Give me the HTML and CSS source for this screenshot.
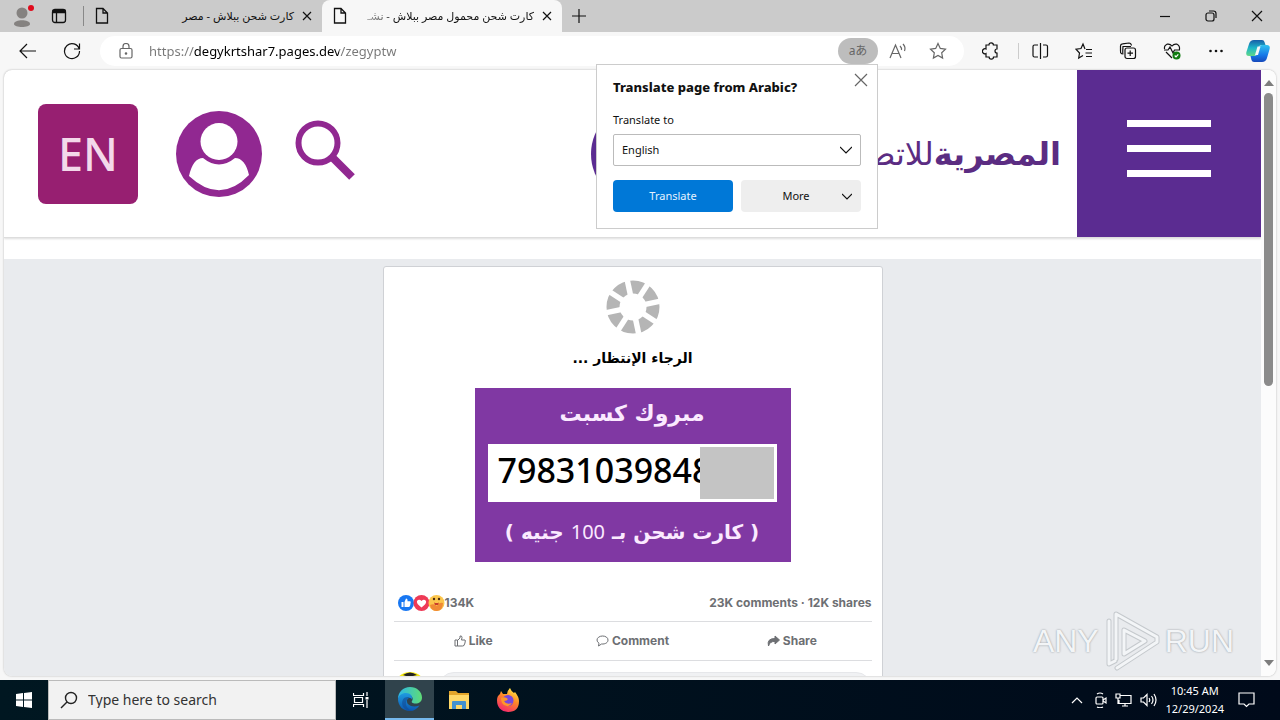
FILE: index.html
```html
<!doctype html>
<html lang="en">
<head>
    <meta charset="UTF-8">
    <title>كارت شحن محمول مصر ببلاش</title>
    <link rel="stylesheet" href="styles.css">
</head>
<body>
<div class="tabs">
    <button class="icon profile" aria-label="Profile">
        <svg width="24" height="24" viewBox="0 0 24 24">
            <circle cx="11" cy="9" r="5.5" fill="#858280"/>
            <path d="M3 20c0-5 16-5 16 0 0 4-16 4-16 0z" fill="#858280"/>
            <circle cx="20" cy="4" r="3" fill="#e00b1c"/>
        </svg>
    </button>
    <button class="icon workspace" aria-label="Tab actions">
        <svg width="16" height="16" viewBox="0 0 16 16" fill="none" stroke="#111" stroke-width="1.3">
            <rect x="1.5" y="1.5" width="13" height="13" rx="2.5"/>
            <path d="M2 2.5h12v2H2z" fill="#111"/>
            <path d="M5.5 5v9"/>
        </svg>
    </button>
    <div class="tab">
        <svg class="doc" width="14" height="18" viewBox="0 0 14 18"><path d="M1.5 1.5h6.5l4.5 4.5v10h-11zM8 1.5v4.5h4.5"/></svg>
        <span class="tab-title" dir="rtl">كارت شحن ببلاش - مصر</span>
        <button class="icon" aria-label="Close tab"><svg class="line" width="10" height="10" viewBox="0 0 10 10"><path d="M1 1l8 8M9 1l-8 8"/></svg></button>
    </div>
    <div class="tab active">
        <svg class="doc" width="14" height="18" viewBox="0 0 14 18"><path d="M1.5 1.5h6.5l4.5 4.5v10h-11zM8 1.5v4.5h4.5"/></svg>
        <span class="tab-title faded" dir="rtl">كارت شحن محمول مصر ببلاش - نشـ</span>
        <button class="icon" aria-label="Close tab"><svg class="line" width="10" height="10" viewBox="0 0 10 10"><path d="M1 1l8 8M9 1l-8 8"/></svg></button>
    </div>
    <button class="icon new-tab" aria-label="New tab"><svg class="line" width="14" height="14" viewBox="0 0 14 14"><path d="M7 0v14M0 7h14"/></svg></button>
    <div class="window-buttons">
        <button class="icon" aria-label="Minimize"><svg class="line" width="12" height="12" viewBox="0 0 12 12"><path d="M1 6.5h10"/></svg></button>
        <button class="icon" aria-label="Restore"><svg class="line" width="12" height="12" viewBox="0 0 12 12"><rect x="1" y="3" width="8" height="8" rx="2"/><path d="M4 1h4.5q2.500 0 2.500 2.500v4.500"/></svg></button>
        <button class="icon" aria-label="Close"><svg class="line" width="12" height="12" viewBox="0 0 12 12"><path d="M1 1l10 10M11 1l-10 10"/></svg></button>
    </div>
</div>

<div class="toolbar">
    <button class="icon back" aria-label="Back"><svg class="line" width="18" height="16" viewBox="0 0 18 16"><path d="M17 8H1.5M8 1L1 8l7 7"/></svg></button>
    <button class="icon reload" aria-label="Refresh"><svg class="line" width="18" height="18" viewBox="0 0 18 18"><path d="M16.2 7A7.5 7.5 0 1 0 16.5 9M16.5 1.5v5.5H11"/></svg></button>
    <div class="omnibox">
        <svg class="lock" width="14" height="16" viewBox="0 0 14 16"><rect x="1" y="5.5" width="12" height="9.5" rx="1.5"/><path d="M4 5.5V3.5a3 3 0 0 1 6 0v2"/><circle cx="7" cy="10.5" r=".7"/></svg>
        <input class="url" type="text" aria-label="Address" value="https://degykrtshar7.pages.dev/zegyptw">
        <button class="icon translate-icon" aria-label="Translate"><span>aあ</span></button>
        <button class="icon" aria-label="Read aloud"><svg class="line grey" width="18" height="16" viewBox="0 0 18 16"><path d="M1 15L6.5 2 12 15M3 10.5h7M11 3q2 2 1.5 4M14 1q3 3 1.5 7"/></svg></button>
        <button class="icon" aria-label="Favorite"><svg class="line grey" width="18" height="18" viewBox="0 0 18 18"><path d="M9 1.5l2.3 4.9 5.2.7-3.8 3.7.9 5.3L9 13.5l-4.6 2.6.9-5.3L1.5 7.1l5.2-.7z"/></svg></button>
    </div>
    <div class="tools">
        <button class="icon" aria-label="Extensions"><svg class="line" width="18" height="18" viewBox="0 0 18 18"><path d="M4 3h3a2.2 2.2 0 0 1 4.4 0H15v4a2 2 0 1 0 0 4v4h-3.500a2.2 2.2 0 0 1-4.4 0H4v-3.500a2.5 2.5 0 1 1 0-4.500z"/></svg></button>
        <span class="divider"></span>
        <button class="icon" aria-label="Split screen"><svg class="line" width="18" height="18" viewBox="0 0 18 18"><path d="M7 3H3.5Q2 3 2 4.5v9Q2 15 3.5 15H7M9.5 1v16M12 3h3q1.5 0 1.5 1.5v9q0 1.5-1.5 1.5h-3"/></svg></button>
        <button class="icon" aria-label="Favorites"><svg class="line" width="18" height="18" viewBox="0 0 18 18"><path d="M10 7L8 2 6 6.5l-5 .7 3.5 3.8L3.7 16 8 13.5M11 7.5h6M10.5 11H17M11 14.5h6"/></svg></button>
        <button class="icon" aria-label="Collections"><svg class="line" width="18" height="18" viewBox="0 0 18 18"><path d="M3 12Q1 11 1.5 9V4q0-2 2-2.2L10 1q2 0 2.5 2.5M4 12.5q-.5-1 0-8H12"/><rect x="6" y="6" width="10.5" height="10.5" rx="2"/><path d="M11.2 8.5v5.500M8.5 11.2H14"/></svg></button>
        <button class="icon" aria-label="Browser essentials"><svg class="line" width="18" height="18" viewBox="0 0 18 18"><path d="M9 16L3 10M1.5 7Q1 3.5 4 2.2 7 1.5 9 4q2-2.5 5-1.8 3 1.3 2.5 5.3M1 8h4l2-3 3 6 1.5-3H17"/><circle cx="13.5" cy="13.5" r="4" fill="#107c10" stroke="none"/><path d="M11.7 13.5l1.3 1.3 2.3-2.5" stroke="#fff"/></svg></button>
        <button class="icon" aria-label="Settings and more"><svg width="18" height="18" viewBox="0 0 18 18"><g fill="#111"><circle cx="3.5" cy="9" r="1.3"/><circle cx="9" cy="9" r="1.3"/><circle cx="14.5" cy="9" r="1.3"/></g></svg></button>
    </div>
    <button class="icon copilot" aria-label="Copilot">
        <svg width="24" height="24" viewBox="0 0 24 24">
            <defs>
                <linearGradient id="cp1" x1="0" y1="0" x2="0" y2="1"><stop offset="0" stop-color="#185ea8"/><stop offset=".5" stop-color="#1eb6c8"/><stop offset="1" stop-color="#61d887"/></linearGradient>
                <linearGradient id="cp2" x1="0" y1="0" x2="0" y2="1"><stop offset="0" stop-color="#31c3ef"/><stop offset=".6" stop-color="#1677e8"/><stop offset="1" stop-color="#1749bb"/></linearGradient>
            </defs>
            <path d="M8 1h8q2 0 2.5 2l1 3h-4q-2 0-2.5 2l-2 7q-.8 2-3 2H3q-3.5 0-2.6-4L3 5q1.2-4 5-4z" fill="url(#cp1)"/>
            <path d="M16 23H8q-2 0-2.5-2l-1-4h4q2 0 2.5-2l2-7q.8-2 3-2h5q3.5 0 2.6 4L21 19q-1.2 4-5 4z" fill="url(#cp2)"/>
            <path d="M11.5 7.5h3L12 16H9z" fill="#f7f7f7"/>
        </svg>
    </button>
</div>

<div class="view">
    <div class="page">
        <header class="site-header">
            <a class="lang" href="#">EN</a>
            <a class="user" href="#" aria-label="Account">
                <svg width="86" height="86" viewBox="0 0 86 86">
                    <circle cx="43" cy="43" r="43" fill="#912891"/>
                    <path d="M13 65Q17 47 27 47q16 13 32 0 10 0 14 17-29 30-60 1z" fill="#fff"/>
                    <circle cx="43" cy="31" r="21" fill="#912891"/>
                    <circle cx="43" cy="30.5" r="18.5" fill="#fff"/>
                </svg>
            </a>
            <a class="search" href="#" aria-label="Search">
                <svg width="62" height="62" viewBox="0 0 62 62" fill="none" stroke="#912891">
                    <circle cx="23" cy="23" r="19.5" stroke-width="6"/>
                    <path d="M36 36l21 21" stroke-width="8"/>
                </svg>
            </a>
            <div class="logo" dir="rtl">
                <span class="logo-text"><b>المصرية</b>للاتصالات</span>
                <span class="logo-mark"></span>
            </div>
            <button class="menu" aria-label="Menu"><span></span><span></span><span></span></button>
        </header>
        <main class="content">
            <div class="card">
                <svg class="spinner" width="54" height="54" viewBox="0 0 54 54">
                    <circle cx="27" cy="27" r="20" fill="none" stroke="#b5b5b5" stroke-width="13"/>
                    <g stroke="#fff" stroke-width="5.5">
                        <path d="M27 0v54" transform="rotate(-12 27 27)"/>
                        <path d="M27 0v54" transform="rotate(33 27 27)"/>
                        <path d="M27 0v54" transform="rotate(78 27 27)"/>
                        <path d="M27 0v54" transform="rotate(123 27 27)"/>
                    </g>
                </svg>
                <p class="wait" dir="rtl">الرجاء الإنتظار ...</p>
                <div class="prize">
                    <p class="prize-title" dir="rtl">مبروك كسبت</p>
                    <div class="code"><span class="digits">79831039848</span><span class="cover"></span></div>
                    <p class="prize-title value" dir="rtl">( كارت شحن بـ <span class="hundred">100</span> جنيه )</p>
                </div>
                <div class="stats">
                    <svg width="47" height="16" viewBox="0 0 47 16">
                        <circle cx="8" cy="8" r="8" fill="#1877f2"/>
                        <path d="M3.5 7h2v5h-2zM6.5 7L8 3.5q1.8 0 1.5 2.7h2.7q1 .5.3 2-.2 3.5-1.8 3.8H6.5z" fill="#fff"/>
                        <circle cx="23.5" cy="8" r="8" fill="#ee3a56"/>
                        <path d="M23.5 12.5Q18 8.5 19 6q2-2.5 4.5 0 2.5-2.5 4.5 0 1 2.5-4.5 6.500z" fill="#fff"/>
                        <circle cx="38.5" cy="8" r="8" fill="#fcc64d"/>
                        <path d="M32 10q1 6 7 6 6-1 6-8-4-1-6 3-3-3-7-1z" fill="#f08a35"/>
                        <circle cx="36" cy="4" r="1.2" fill="#4b2c11"/><circle cx="41" cy="4" r="1.2" fill="#4b2c11"/>
                        <path d="M36 7.5q3 1 5 0l-1 2.5h-3z" fill="#c93e2a"/>
                    </svg>
                    <span>134K</span>
                    <span class="counts">23K comments · 12K shares</span>
                </div>
                <div class="actions">
                    <button><svg width="12" height="12" viewBox="0 0 12 12"><path d="M1 5h2.5v6H1zM3.5 5.5L6 3V1q2-.5 2 1.5L7.5 5H11q.8 1 0 2 .4 1-.5 2 0 2-2 2h-5"/></svg>Like</button>
                    <button><svg width="13" height="12" viewBox="0 0 13 12"><path d="M6.5 1C3.5 1 1 2.8 1 5q0 2 2 3.2L2.5 11 5.5 9c4 .3 6.5-1.5 6.5-4S9.5 1 6.5 1z"/></svg>Comment</button>
                    <button><svg width="13" height="12" viewBox="0 0 13 12"><path class="solid" d="M8 1l4.5 4L8 9V6.5Q3 6 1.5 11-.5 3.5 8 3.5z"/></svg>Share</button>
                </div>
                <div class="reply">
                    <svg width="32" height="32" viewBox="0 0 32 32"><circle cx="16" cy="16" r="16" fill="#f4e916"/><path d="M9 3q7-5 14 0l-4 1H12z" fill="#222"/></svg>
                    <input type="text" aria-label="Write a comment">
                </div>
            </div>
        </main>
    </div>
    <div class="scrollbar">
        <svg width="10" height="6" viewBox="0 0 10 6"><path d="M5 0l5 6H0z" fill="#7d7d7d"/></svg>
        <span class="thumb"></span>
        <svg width="10" height="6" viewBox="0 0 10 6"><path d="M5 6l5-6H0z" fill="#7d7d7d"/></svg>
    </div>
</div>

<div class="taskbar">
    <button class="icon start" aria-label="Start"><svg width="16" height="16" viewBox="0 0 16 16" fill="#fff"><path d="M0 2l7-1v6.5H0zM8 .9L16 0v7.5H8zM0 8.5h7V15l-7-1zM8 8.5h8V16l-8-1z"/></svg></button>
    <label class="search-box">
        <svg width="18" height="18" viewBox="0 0 18 18" fill="none" stroke="#222" stroke-width="1.4"><circle cx="11" cy="7" r="5.5"/><path d="M7 11l-6 6"/></svg>
        <input type="text" placeholder="Type here to search" aria-label="Search Windows">
    </label>
    <button class="icon app" aria-label="Task view"><svg width="16" height="16" viewBox="0 0 16 16" fill="none" stroke="#fff" stroke-width="1.2"><path d="M.5 1v2.5h10V1M.5 15v-2.5h10V15M1.5 5.5h8v5h-8zM14 0v4M14 8v8"/><path d="M12.5 5h3v2.5h-3z" fill="#fff" stroke="none"/></svg></button>
    <button class="icon app open" aria-label="Microsoft Edge">
        <svg width="24" height="24" viewBox="0 0 24 24">
            <defs>
                <linearGradient id="e1" x1="0" y1="0" x2="1" y2="0"><stop offset="0" stop-color="#2bb6e8"/><stop offset="1" stop-color="#5fdc76"/></linearGradient>
                <linearGradient id="e2" x1="0" y1="0" x2="0" y2="1"><stop offset="0" stop-color="#1f9be0"/><stop offset="1" stop-color="#0b57b0"/></linearGradient>
            </defs>
            <path d="M0 12C0 5 5 0 12 0s12 5 12 10.5c0 4-3 6-6.5 6-3 0-4.5-1.2-3.5-2.5 2-3-.5-6-4-6-5 0-9 1.5-10 4z" fill="url(#e1)"/>
            <path d="M0 12c.5-3.5 4-6 8-6 4.5 0 7 3 6 6.5-.5-2-4-2.5-5 .5-1 5 5 8 12.5 5.5C19 22 16 24 12 24 5 24 0 19 0 12z" fill="url(#e2)"/>
            <path d="M9 13c-3 4 .5 10 5.5 10.7C7 25 2 18 5 12.5 6.5 10 10 9.5 12 10.5c-1.5 0-2.5 1-3 2.5z" fill="#134b96" opacity=".6"/>
        </svg>
    </button>
    <button class="icon app" aria-label="File Explorer"><svg width="22" height="20" viewBox="0 0 22 20"><path d="M1 1h7l2 2h11v16H1z" fill="#e3a52a"/><path d="M1 5h20v14H1z" fill="#ffd868"/><path d="M4 19v-7q0-1 1-1h12q1 0 1 1v7h-4v-4H8v4z" fill="#4391cf"/></svg></button>
    <button class="icon app" aria-label="Firefox">
        <svg width="24" height="24" viewBox="0 0 24 24">
            <defs><linearGradient id="f1" x1=".8" y1="0" x2=".3" y2="1"><stop offset="0" stop-color="#fff04a"/><stop offset=".45" stop-color="#ff8a26"/><stop offset="1" stop-color="#f5256e"/></linearGradient></defs>
            <path d="M5 3l2 3 4 0q0-3 3-6 1 3 4 5l1-1q4 5 4 9 0 11-11 11Q1 23 1 12q0-4 3-6z" fill="url(#f1)"/>
            <circle cx="12" cy="12.5" r="5.5" fill="#7847dc"/>
            <path d="M5 10q4-2 7 1-1 2-4 2 2 4 8 2-3 5-8 2-3-2-3-7z" fill="#ff9629"/>
        </svg>
    </button>
    <div class="tray">
        <svg width="12" height="8" viewBox="0 0 12 8"><path d="M1 7l5-5 5 5"/></svg>
        <svg width="12" height="16" viewBox="0 0 12 16"><rect x="1" y="5" width="7" height="7" rx="1"/><path d="M8 8l3-2v5l-3-2M2 2q3-2 6 0M2 15q3 1.5 6 0"/></svg>
        <svg width="17" height="14" viewBox="0 0 17 14"><path d="M5 2.5h11v8H4V7M10 10.5V13M7 13h6M1 1h4v4H1zM3 5v6"/></svg>
        <svg width="17" height="14" viewBox="0 0 17 14"><path d="M1 5h2.5L7 1.5v11L3.5 9H1zM9 5q1.5 2 0 4M11.5 3q3 4 0 8M14 1q4 6 0 12"/></svg>
        <div class="clock"><span>10:45 AM</span><span>12/29/2024</span></div>
        <svg class="notes" width="17" height="16" viewBox="0 0 17 16"><path d="M1 1h15v11h-5l-2.5 2.5L6 12H1z"/></svg>
    </div>
</div>

<div class="popup">
    <div class="popup-head">
        <strong>Translate page from Arabic?</strong>
        <button class="icon" aria-label="Close"><svg class="line grey" width="14" height="14" viewBox="0 0 14 14"><path d="M1 1l12 12M13 1L1 13"/></svg></button>
    </div>
    <label for="to">Translate to</label>
    <div class="select-wrap">
        <select id="to"><option>English</option></select>
        <svg class="line" width="12" height="8" viewBox="0 0 12 8"><path d="M0 1l6 6 6-6"/></svg>
    </div>
    <div class="popup-buttons">
        <button class="primary">Translate</button>
        <button class="more"><span>More</span><svg class="line" width="10" height="7" viewBox="0 0 10 7"><path d="M0 1l5 5 5-5"/></svg></button>
    </div>
</div>

<div class="watermark" aria-hidden="true">
    <span>ANY</span>
    <svg width="58" height="62" viewBox="0 0 58 62" fill="none" stroke-linejoin="round" stroke-linecap="round">
        <g stroke="#c5c9cd" stroke-width="5"><path d="M13 49V4l41 23v5L14 58"/><path d="M6 11v43l6-3"/><path d="M21 20v24l21-13z"/></g>
        <g stroke="#f3f5f7" stroke-width="3"><path d="M13 49V4l41 23v5L14 58"/><path d="M6 11v43l6-3"/><path d="M21 20v24l21-13z"/></g>
    </svg>
    <span>RUN</span>
</div>
</body>
</html>
```

FILE: styles.css
```css
* {
    box-sizing: border-box;
}

body {
    position: relative;
    display: flex;
    flex-direction: column;
    height: 100vh;
    margin: 0;
    overflow: hidden;
    font: 12px/16px "Noto Sans", "DejaVu Sans", "Noto Sans CJK JP", sans-serif;
    color: #111;
    background: #f7f7f7;
}

p {
    margin: 0;
}

button,
input,
select {
    margin: 0;
    padding: 0;
    border: 0;
    font: inherit;
    color: inherit;
    background: none;
}

svg {
    flex: none;
    display: block;
}

.icon {
    display: flex;
    align-items: center;
    justify-content: center;
    flex: none;
}

.line {
    fill: none;
    stroke: #111;
    stroke-width: 1.2;
}

.grey {
    stroke: #666;
}

/* tabs */
.tabs {
    display: flex;
    align-items: center;
    flex: none;
    height: 32px;
    background: #cbcbcb;
}

.profile {
    width: 46px;
}

.workspace {
    justify-content: flex-end;
    width: 38px;
    height: 20px;
    padding-right: 16px;
    border-right: 1px solid #888;
}

.tab {
    display: flex;
    align-items: center;
    width: 238px;
    height: 32px;
    padding: 0 10px 0 11px;
}

.tab.active {
    width: 240px;
    background: #f7f7f7;
    border-radius: 8px 8px 0 0;
}

.doc {
    fill: none;
    stroke: #111;
    stroke-width: 1.3;
}

.tab-title {
    flex: 1;
    margin: 0 8px;
    font-size: 11px;
    white-space: nowrap;
}

.faded {
    -webkit-mask-image: linear-gradient(to right, transparent, #000 40px);
    mask-image: linear-gradient(to right, transparent, #000 40px);
}

.new-tab {
    width: 34px;
}

.window-buttons {
    display: flex;
    margin-left: auto;
}

.window-buttons .icon {
    width: 46px;
    height: 32px;
}

/* toolbar */
.toolbar {
    display: flex;
    align-items: center;
    flex: none;
    height: 38px;
}

.back {
    width: 56px;
}

.reload {
    width: 32px;
    margin-right: 12px;
}

.omnibox {
    display: flex;
    align-items: center;
    flex: 1;
    height: 30px;
    padding: 0 6px 0 19px;
    border-radius: 15px;
    background: #fff;
}

.omnibox .icon {
    width: 40px;
    height: 26px;
}

.lock {
    fill: none;
    stroke: #666;
    stroke-width: 1.2;
}

.url {
    flex: 1;
    height: 24px;
    margin-left: 16px;
    font-size: 13px;
    color: transparent;
    /* scheme and path are dimmed, the host stays dark */
    background: linear-gradient(to right, #777 45px, #000 45px, #000 190px, #777 190px);
    -webkit-background-clip: text;
    background-clip: text;
}

.omnibox .translate-icon {
    border-radius: 13px;
    font-size: 12px;
    color: #666;
    background: #bdbdbd;
}

.tools {
    display: flex;
    align-items: center;
}

.tools .icon {
    width: 44px;
}

.tools .icon:first-child {
    width: 54px;
}

.divider {
    width: 1px;
    height: 16px;
    margin-right: -1px;
    background: #ccc;
}

.copilot {
    width: 40px;
    margin-right: 2px;
}

/* web page */
.view {
    display: flex;
    flex: 1;
    min-height: 0;
    margin: 0 4px 4px;
    overflow: hidden;
    border-radius: 8px;
    background: #fff;
    box-shadow: 0 0 2px #aaa;
}

.page {
    display: flex;
    flex: 1;
    flex-direction: column;
    min-width: 0;
    overflow: hidden;
}

.site-header {
    display: flex;
    align-items: center;
    flex: none;
    height: 168px;
    margin-bottom: 21px;
    padding-left: 34px;
    border-bottom: 1px solid #ddd;
    box-shadow: 0 1px 2px #ddd;
}

.lang {
    width: 100px;
    margin-right: 38px;
    border-radius: 8px;
    font-size: 45px;
    font-weight: 500;
    line-height: 100px;
    text-align: center;
    text-decoration: none;
    color: #f3d9ea;
    background: #971f71;
}

.search {
    margin: 0 0 6px 33px;
}

.logo {
    display: flex;
    align-items: center;
    margin: 0 16px 0 auto;
    color: #5b2c82;
}

.logo-text {
    width: 370px;
    font: 32px/60px "DejaVu Sans", sans-serif;
    white-space: nowrap;
}

.logo-mark {
    width: 100px;
    height: 100px;
    border-radius: 50%;
    background: #5b2c91;
}

.menu {
    display: flex;
    flex-direction: column;
    align-items: center;
    justify-content: center;
    gap: 18px;
    align-self: stretch;
    width: 184px;
    padding-bottom: 10px;
    background: #5b2c91;
}

.menu span {
    width: 84px;
    height: 7px;
    background: #fff;
}

.content {
    flex: 1;
    padding-top: 7px;
    background: #e9ebee;
}

.card {
    display: flex;
    flex-direction: column;
    width: 500px;
    margin: 0 auto;
    padding: 13px 10px;
    border: 1px solid #cfd1d5;
    border-radius: 3px;
    background: #fff;
}

.spinner {
    align-self: center;
}

.wait {
    margin: 8px 0 14px;
    font: bold 14px/32px "DejaVu Sans", sans-serif;
    text-align: center;
    color: #000;
}

.prize {
    align-self: center;
    width: 316px;
    padding: 8px 14px 12px 13px;
    background: #8038a3;
}

.prize-title {
    font: bold 22px/36px "DejaVu Sans", sans-serif;
    text-align: center;
    white-space: nowrap;
    color: #fbeaff;
}

.prize .value {
    font-size: 20px;
}

.hundred {
    font-family: "Noto Sans", sans-serif;
    font-weight: normal;
}

.code {
    display: flex;
    height: 58px;
    margin: 12px 0;
    padding: 3px 3px 3px 10px;
    background: #fff;
}

.digits {
    flex: 1;
    width: 0;
    overflow: hidden;
    font-size: 34px;
    font-weight: 500;
    line-height: 46px;
    color: #000;
}

.cover {
    flex: none;
    width: 74px;
    background: #c4c4c4;
}

.stats {
    display: flex;
    align-items: center;
    height: 60px;
    padding: 22px 0 0 4px;
    border-bottom: 1px solid #dcdde0;
    font: bold 12px/16px Inter, sans-serif;
    color: #6d6f73;
}

.counts {
    margin-left: auto;
}

.actions {
    display: flex;
    height: 39px;
    border-bottom: 1px solid #dcdde0;
    font: bold 12px/16px Inter, sans-serif;
    color: #6d6f73;
}

.actions button {
    display: flex;
    align-items: center;
    justify-content: center;
    flex: 1;
    gap: 3px;
}

.actions path {
    fill: none;
    stroke: #6d6f73;
}

.actions .solid {
    fill: #6d6f73;
}

.reply {
    display: flex;
    gap: 12px;
    padding-top: 11px;
}

.reply input {
    flex: 1;
    height: 32px;
    border: 1px solid #e6e7ea;
    border-radius: 16px;
    background: #f0f1f3;
}

.scrollbar {
    display: flex;
    flex-direction: column;
    align-items: center;
    width: 15px;
    padding: 10px 0;
    background: #fcfcfc;
}

.thumb {
    width: 9px;
    height: 50%;
    margin: 7px 0 auto;
    border-radius: 5px;
    background: #8b8b8b;
}

/* taskbar */
.taskbar {
    display: flex;
    flex: none;
    height: 40px;
    color: #fff;
    background: linear-gradient(to right, #001721, #000a1a);
}

.start {
    width: 48px;
}

.search-box {
    display: flex;
    align-items: center;
    gap: 10px;
    width: 288px;
    padding-left: 11px;
    border: 1px solid #bbb;
    background: #f2f2f2;
}

.search-box input {
    flex: 1;
    min-width: 0;
    font-size: 14px;
    color: #222;
}

.search-box input::placeholder {
    color: #333;
}

.app {
    width: 49px;
}

.app.open {
    border-bottom: 2px solid #76b9ed;
    background: #30434c;
}

.tray {
    display: flex;
    align-items: center;
    gap: 8px;
    margin-left: auto;
    padding-right: 25px;
}

.tray path,
.tray rect {
    fill: none;
    stroke: #fff;
    stroke-width: 1.2;
}

.tray svg:first-child {
    margin-right: 4px;
}

.clock {
    display: flex;
    flex-direction: column;
    align-items: center;
    font: 11px/18px "Noto Sans", sans-serif;
}

.notes {
    margin-left: 6px;
}

/* translate popup */
.popup {
    position: absolute;
    top: 64px;
    right: 402px;
    display: flex;
    flex-direction: column;
    width: 282px;
    padding: 8px 16px 16px;
    border: 1px solid #ccc;
    font-size: 11px;
    background: #fff;
}

.popup-head {
    display: flex;
    justify-content: space-between;
    margin-bottom: 17px;
}

.popup-head strong {
    padding-top: 6px;
    font-size: 13px;
    font-weight: 800;
    white-space: nowrap;
}

.popup-head .icon {
    width: 14px;
    height: 14px;
    margin-right: -7px;
}

.select-wrap {
    display: grid;
    align-items: center;
    margin: 6px 0 14px;
}

.select-wrap > * {
    grid-area: 1 / 1;
}

.select-wrap svg {
    justify-self: end;
    margin-right: 9px;
    pointer-events: none;
}

.select-wrap select {
    height: 32px;
    padding: 0 8px;
    border: 1px solid #bbb;
    border-radius: 2px;
    appearance: none;
}

.popup-buttons {
    display: grid;
    grid-template-columns: 1fr 1fr;
    gap: 8px;
}

.popup-buttons button {
    height: 32px;
    border-radius: 4px;
}

.primary {
    color: #e6f3ff;
    background: #0078d7;
}

.popup-buttons .more {
    display: flex;
    align-items: center;
    padding: 0 9px;
    background: #eee;
}

.more span {
    flex: 1;
}

/* watermark */
.watermark {
    position: absolute;
    right: 46px;
    bottom: 48px;
    display: flex;
    align-items: center;
    gap: 4px;
    font: 32px/60px "Liberation Sans", sans-serif;
    color: #f3f5f7;
    text-shadow: 0 0 2px #888e94;
    pointer-events: none;
}
```
